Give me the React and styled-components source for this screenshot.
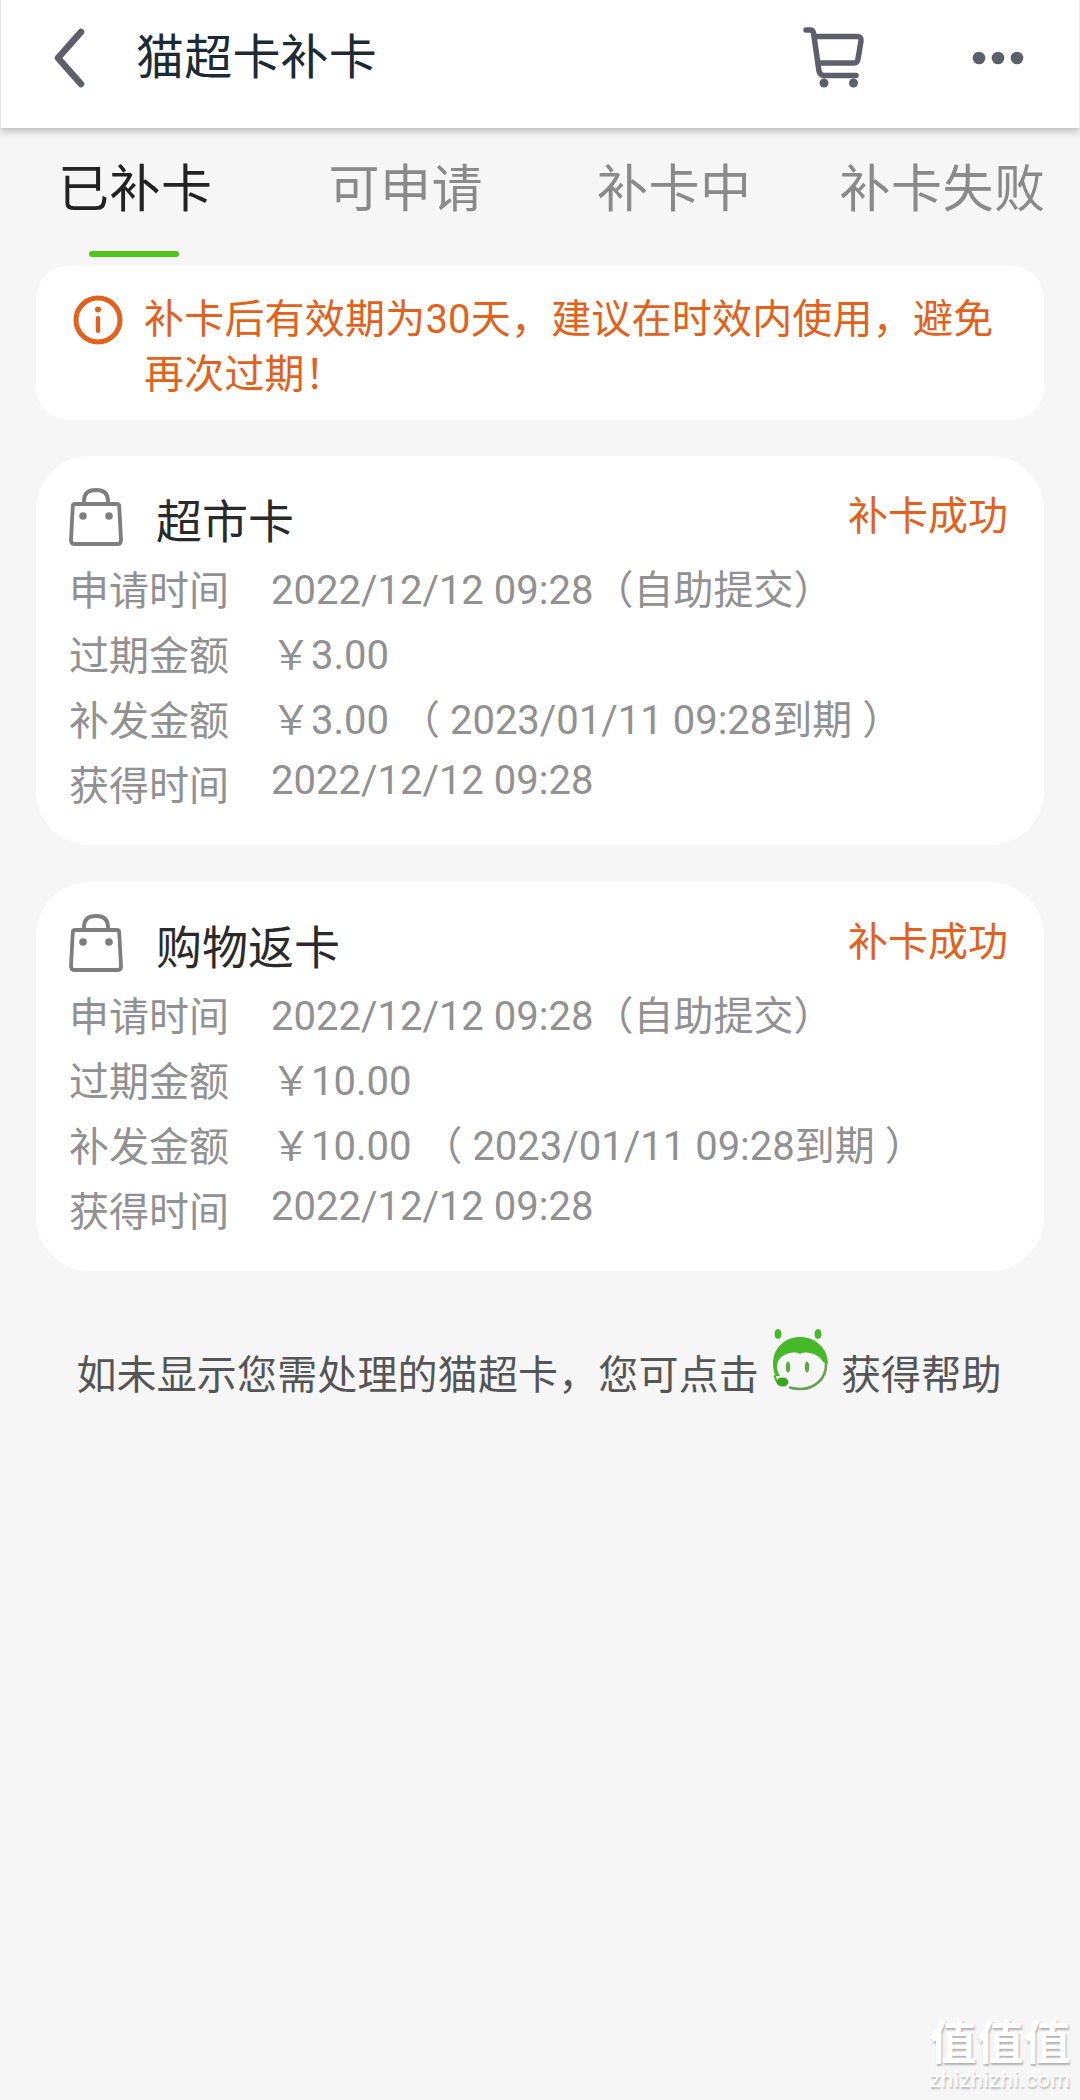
import React from "react";
import styled, { createGlobalStyle } from "styled-components";

const Global = createGlobalStyle`
  html, body { margin: 0; padding: 0; background: #f6f6f6; }
  * { box-sizing: border-box; }
  body { font-family: Roboto, "Noto Sans CJK SC", sans-serif; }
`;

const Page = styled.div`
  position: relative;
  width: 1080px;
  height: 2100px;
  overflow: hidden;
  background: #f6f6f6;
`;

const Header = styled.header`
  height: 128px;
  display: flex;
  align-items: center;
  background: #fff;
  border-left: 1px solid #e4e4e4;
  border-right: 1px solid #eee;
  box-shadow: 0 3px 8px rgba(0, 0, 0, 0.26);
  padding: 0 0 13px 49px;
`;

const Title = styled.h1`
  margin: 0 0 0 50px;
  font-size: 48px;
  font-weight: 400;
  line-height: 60px;
  letter-spacing: 0.2px;
  color: #1c2a33;
  flex: 1;
`;

const IconSlot = styled.svg`
  display: block;
  flex: none;
`;

const Tabs = styled.nav`
  display: flex;
  height: 138px;
  padding-top: 30px;
`;

const Tab = styled.div`
  position: relative;
  margin-left: ${(p) => p.$left}px;
  font-size: 51px;
  line-height: 64px;
  letter-spacing: 0.5px;
  color: ${(p) => (p.$active ? "#222" : "#8a8a8a")};
  white-space: nowrap;
`;

const Indicator = styled.span`
  position: absolute;
  left: 31px;
  top: 93px;
  width: 90px;
  height: 6px;
  border-radius: 3px;
  background: #52c41a;
`;

const Main = styled.main`
  display: flex;
  flex-direction: column;
  padding: 0 36px;
`;

const Notice = styled.section`
  display: flex;
  align-items: flex-start;
  gap: 21px;
  height: 154px;
  padding: 26px 30px 0 36px;
  background: #fff;
  border-radius: 32px;
  color: #e2611c;
  font-size: 40px;
  line-height: 55px;
  letter-spacing: 0.2px;
`;

const NoticeText = styled.div`
  width: 870px;
`;

const Card = styled.article`
  height: 389px;
  margin-top: ${(p) => p.$top}px;
  padding: 28px 36px 0 33px;
  background: #fff;
  border-radius: 54px;
`;

const CardHead = styled.div`
  display: flex;
  align-items: center;
  height: 72px;
  margin-bottom: 3px;
`;

const CardName = styled.div`
  flex: 1;
  margin: 4px 0 0 33px;
  font-size: 46px;
  line-height: 60px;
  color: #2a2a2a;
`;

const Status = styled.div`
  margin-top: -6px;
  font-size: 40px;
  line-height: 56px;
  color: #e2611c;
`;

const Row = styled.div`
  display: flex;
  align-items: center;
  height: 65px;
  color: #919191;
  white-space: nowrap;
`;

const Label = styled.span`
  width: 202px;
  font-size: 40px;
  line-height: 56px;
`;

const Value = styled.span`
  font-size: 40px;
  line-height: 52px;
  margin-left: ${(p) => p.$left || 0}px;
  margin-top: ${(p) => (p.$up ? -12 : -2)}px;
`;

const Footer = styled.div`
  display: flex;
  align-items: center;
  justify-content: center;
  gap: 11px;
  margin-top: 51px;
  height: 100px;
  padding-right: 2px;
  font-size: 40px;
  letter-spacing: 0.15px;
  color: #555;
  white-space: nowrap;
`;

const Watermark = styled.div`
  position: absolute;
  right: 9px;
  bottom: 8px;
  width: 142px;
  text-align: center;
  color: #fff;
  text-shadow: 1px 2px 2px rgba(0, 0, 0, 0.28);
`;

const MarkGlyphs = styled.div`
  font-size: 47px;
  line-height: 50px;
  font-weight: 700;
  white-space: nowrap;
`;

const MarkSite = styled.div`
  font-size: 22px;
  line-height: 24px;
  letter-spacing: 0.5px;
`;

const Back = () => (
  <IconSlot width="36" height="62" viewBox="0 0 36 62" fill="none">
    <path d="M31 5 L8 31 L31 57" stroke="#5e6069" strokeWidth="6.500" strokeLinecap="round" strokeLinejoin="round" />
  </IconSlot>
);

const Cart = () => (
  <IconSlot width="62" height="62" viewBox="0 0 62 62" fill="none" style={{ marginRight: 107 }}>
    <path d="M3 3 H7 Q10 3 10.500 6 L16 44 Q17 48.500 21 48.500 H53" stroke="#5e6069" strokeWidth="5.500" strokeLinecap="round" strokeLinejoin="round" />
    <path d="M12 9.500 H54 Q58.500 9.500 58 14 L55 32 Q54.500 36 51 36 H15" stroke="#5e6069" strokeWidth="5.500" strokeLinejoin="round" />
    <circle cx="21" cy="56" r="4.500" fill="#5e6069" />
    <circle cx="50.500" cy="56" r="4.500" fill="#5e6069" />
  </IconSlot>
);

const More = () => (
  <IconSlot width="52" height="14" viewBox="0 0 52 14" style={{ marginRight: 55 }}>
    <circle cx="7" cy="7" r="6.300" fill="#5e6069" />
    <circle cx="26" cy="7" r="6.300" fill="#5e6069" />
    <circle cx="45" cy="7" r="6.300" fill="#5e6069" />
  </IconSlot>
);

const InfoIcon = () => (
  <IconSlot width="50" height="50" viewBox="0 0 50 50" fill="none" style={{ marginTop: 3, marginLeft: 1 }}>
    <circle cx="25" cy="25" r="22" stroke="#e2611c" strokeWidth="5" />
    <circle cx="25" cy="14.500" r="3" fill="#e2611c" />
    <rect x="22.800" y="21" width="4.400" height="17" rx="2" fill="#e2611c" />
  </IconSlot>
);

const Bag = () => (
  <IconSlot width="54" height="58" viewBox="0 0 54 58" fill="none" style={{ marginTop: -6 }}>
    <path d="M6 16 H48 Q50 16 50.200 18 L52 52 Q52 56 49 56 H5 Q2 56 2 52 L3.800 18 Q4 16 6 16 Z" stroke="#7e7e7e" strokeWidth="3.800" strokeLinejoin="round" />
    <path d="M15 16 V13 Q15 2 27 2 Q39 2 39 13 V16" stroke="#7e7e7e" strokeWidth="3.800" />
    <circle cx="14" cy="28" r="3.800" fill="#7e7e7e" />
    <circle cx="40" cy="28" r="3.800" fill="#7e7e7e" />
  </IconSlot>
);

const Mascot = () => (
  <IconSlot width="60" height="66" viewBox="10 8 60 66" fill="none" style={{ marginTop: -24 }}>
    <ellipse cx="18" cy="15" rx="3.500" ry="5" fill="#46b82a" />
    <ellipse cx="58" cy="15" rx="3.500" ry="5" fill="#46b82a" />
    <path d="M40 18 C26 18 13 28 13 45 C13 50 14 54 16 57 L20 57 C17 52 16 47 18 43 C20 36 33 31 40 35 C47 31 60 36 63 43 L68 45 C68 28 54 18 40 18 Z" fill="#46b82a" />
    <path d="M66 44 C67 60 54 70 40 70 C36 70 33 69.500 30 68.500" stroke="#6a9f58" strokeWidth="2.600" strokeLinecap="round" />
    <ellipse cx="28" cy="48" rx="2.200" ry="5.500" fill="#5aa840" />
    <ellipse cx="47" cy="48" rx="2.200" ry="5.500" fill="#5aa840" />
    <path d="M15 56 C15 60 16 62 18 63" stroke="#46b82a" strokeWidth="2.200" />
    <ellipse cx="22.500" cy="63" rx="6" ry="4.500" fill="#3aa522" />
  </IconSlot>
);

const records = [
  { top: 36, name: "超市卡", amount: "￥3.00", due: "（ 2023/01/11 09:28到期 ）" },
  { top: 37, name: "购物返卡", amount: "￥10.00", due: "（ 2023/01/11 09:28到期 ）" },
];

const tabs = [
  { label: "已补卡", left: 58, active: true },
  { label: "可申请", left: 116 },
  { label: "补卡中", left: 114 },
  { label: "补卡失败", left: 88 },
];

export default function App() {
  return (
    <Page>
      <Global />
      <Header>
        <Back />
        <Title>猫超卡补卡</Title>
        <Cart />
        <More />
      </Header>
      <Tabs>
        {tabs.map((t) => (
          <Tab key={t.label} $left={t.left} $active={t.active}>
            {t.label}
            {t.active && <Indicator />}
          </Tab>
        ))}
      </Tabs>
      <Main>
        <Notice>
          <InfoIcon />
          <NoticeText>补卡后有效期为30天，建议在时效内使用，避免再次过期！</NoticeText>
        </Notice>
        {records.map((r) => (
          <Card key={r.name} $top={r.top}>
            <CardHead>
              <Bag />
              <CardName>{r.name}</CardName>
              <Status>补卡成功</Status>
            </CardHead>
            <Row>
              <Label>申请时间</Label>
              <Value>2022/12/12 09:28（自助提交）</Value>
            </Row>
            <Row>
              <Label>过期金额</Label>
              <Value>{r.amount}</Value>
            </Row>
            <Row>
              <Label>补发金额</Label>
              <Value>{r.amount}</Value>
              <Value $left={11}>{r.due}</Value>
            </Row>
            <Row>
              <Label>获得时间</Label>
              <Value $up>2022/12/12 09:28</Value>
            </Row>
          </Card>
        ))}
        <Footer>
          <span>如未显示您需处理的猫超卡，您可点击</span>
          <Mascot />
          <span>获得帮助</span>
        </Footer>
      </Main>
      <Watermark>
        <MarkGlyphs>值值值</MarkGlyphs>
        <MarkSite>zhizhizhi.com</MarkSite>
      </Watermark>
    </Page>
  );
}
